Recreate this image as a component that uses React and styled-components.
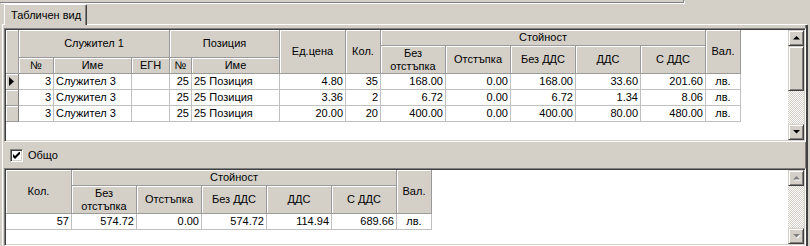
import { Fragment } from 'react';
import styled, { createGlobalStyle } from 'styled-components';

const GlobalStyle = createGlobalStyle`
  html, body {
    margin: 0;
    padding: 0;
    background: #D4D0C8;
    font-family: "Liberation Sans", Arial, sans-serif;
    font-size: 11px;
    color: #000;
  }
`

const Window = styled.div`
  width: 810px;
  height: 246px;
  overflow: hidden;
  background: #D4D0C8;
`
const TopEdge = styled.div`
  width: 683px;
  height: 2px;
  border-bottom: 1px solid #808080;
  border-right: 1px solid #808080;
  box-shadow: 1px 1px 0 #fff;
`
const TabStrip = styled.div`
  display: flex;
  align-items: flex-end;
  margin-top: 1px;
  height: 21px;
  padding-left: 2px;
`
const StripLead = styled.div`
  width: 2px;
  border-bottom: 1px solid #fff;
`
const StripRest = styled.div`
  width: 720px;
  border-bottom: 1px solid #fff;
`
const Tab = styled.div`
  box-sizing: border-box;
  width: 83px;
  height: 21px;
  padding: 4px 0 0 6px;
  border-left: 1px solid #fff;
  border-top: 1px solid #fff;
  border-right: 1px solid #404040;
  box-shadow: inset -1px 0 #808080;
  border-top-right-radius: 2px;
  white-space: nowrap;
`
const Page = styled.div`
  box-sizing: border-box;
  width: 806px;
  margin-left: 2px;
  height: 230px;
  padding: 3px 0 0 1px;
  border-left: 1px solid #fff;
  border-right: 2px solid;
  border-right-color: #404040;
  box-shadow: inset -1px 0 #808080;
  display: flex;
  flex-direction: column;
`
const GridFrame = styled.div`
  box-sizing: border-box;
  width: 802px;
  height: ${p => p.$h}px;
  display: flex;
  border: 1px solid;
  border-color: #808080 #fff #fff #808080;
  box-shadow: inset 1px 1px #404040, inset -1px -1px #D4D0C8;
  padding: 1px;
`
const GridBody = styled.div`
  flex: 1;
  background: #fff;
  overflow: hidden;
`
const Cells = styled.div`
  display: grid;
  grid-template-columns: ${p => p.$cols};
  grid-template-rows: ${p => p.$rows};
  width: max-content;
`
const Head = styled.div`
  box-sizing: border-box;
  grid-column: ${p => p.$col};
  grid-row: ${p => p.$row};
  background: #D4D0C8;
  border-right: 1px solid #9a9a9a;
  border-bottom: 1px solid #9a9a9a;
  box-shadow: inset 1px 1px #fff;
  display: flex;
  align-items: center;
  justify-content: center;
  text-align: center;
  line-height: 13px;
  padding: 0 2px;
  white-space: nowrap;
`
const Indicator = styled.div`
  box-sizing: border-box;
  grid-column: 1;
  background: #D4D0C8;
  border-right: 1px solid #808080;
  border-bottom: 1px solid #9a9a9a;
  box-shadow: inset 1px 1px #fff;
  display: flex;
  align-items: center;
  padding-left: 3px;
`
const Cell = styled.div`
  box-sizing: border-box;
  border-right: 1px solid #c0c0c0;
  border-bottom: 1px solid #c0c0c0;
  padding: 0 2px;
  line-height: 15px;
  text-align: ${p => p.$align || 'right'};
  white-space: nowrap;
  overflow: hidden;
`
const Scroll = styled.div`
  width: 16px;
  display: flex;
  flex-direction: column;
`
const ScrollButton = styled.div`
  box-sizing: border-box;
  width: 16px;
  height: 16px;
  background: #D4D0C8;
  border: 1px solid;
  border-color: #D4D0C8 #404040 #404040 #D4D0C8;
  box-shadow: inset 1px 1px #fff, inset -1px -1px #808080;
  display: flex;
  align-items: center;
  justify-content: center;
`
const Track = styled.div`
  flex: 1;
  background: repeating-conic-gradient(#D4D0C8 0 25%, #fff 0 50%) 0 0 / 2px 2px;
`
const Thumb = styled.div`
  box-sizing: border-box;
  height: ${p => p.$h}px;
  background: #D4D0C8;
  border: 1px solid;
  border-color: #D4D0C8 #404040 #404040 #D4D0C8;
  box-shadow: inset 1px 1px #fff, inset -1px -1px #808080;
`
const OptionsBar = styled.div`
  height: 26px;
  display: flex;
  align-items: center;
  gap: 5px;
  padding-left: 6px;
`
const CheckBox = styled.div`
  box-sizing: border-box;
  width: 13px;
  height: 13px;
  background: #fff;
  border: 1px solid;
  border-color: #808080 #fff #fff #808080;
  box-shadow: inset 1px 1px #404040, inset -1px -1px #D4D0C8;
  display: flex;
  align-items: center;
  justify-content: center;
`

const Arrow = ({ down, disabled }) => (
  <svg width="7" height="4" viewBox="0 0 7 4" style={{ overflow: 'visible' }}>
    {disabled && <polygon points={down ? '1,1 8,1 4.5,4.5' : '4.5,1 8,4.5 1,4.5'} fill="#fff" />}
    <polygon points={down ? '0,0 7,0 3.5,3.5' : '3.5,0 7,3.5 0,3.5'} fill={disabled ? '#808080' : '#000'} />
  </svg>
)

const ScrollBar = ({ thumb, disabled }) => (
  <Scroll>
    <ScrollButton><Arrow disabled={disabled} /></ScrollButton>
    <Track>{thumb && <Thumb $h={thumb} />}</Track>
    <ScrollButton><Arrow down disabled={disabled} /></ScrollButton>
  </Scroll>
)

const TwoLine = () => <span>Без<br />отстъпка</span>

const rows = [
  ['3', 'Служител 3', '', '25', '25 Позиция', '4.80', '35', '168.00', '0.00', '168.00', '33.60', '201.60', 'лв.'],
  ['3', 'Служител 3', '', '25', '25 Позиция', '3.36', '2', '6.72', '0.00', '6.72', '1.34', '8.06', 'лв.'],
  ['3', 'Служител 3', '', '25', '25 Позиция', '20.00', '20', '400.00', '0.00', '400.00', '80.00', '480.00', 'лв.'],
]
const alignOf = j => (j === 1 || j === 4 ? 'left' : j === 12 ? 'center' : 'right')

const ItemsGrid = () => (
  <Cells $cols="13px 35px 78px 38px 22px 88px 66px 35px 65px 65px 65px 65px 65px 35px" $rows="16px 12px 16px repeat(3, 16px)">
    <Head $col="1" $row="1 / 4" />
    <Head $col="2 / 5" $row="1 / 3">Служител 1</Head>
    <Head $col="5 / 7" $row="1 / 3">Позиция</Head>
    <Head $col="7" $row="1 / 4">Ед.цена</Head>
    <Head $col="8" $row="1 / 4">Кол.</Head>
    <Head $col="9 / 14" $row="1">Стойност</Head>
    <Head $col="14" $row="1 / 4">Вал.</Head>
    <Head $col="2" $row="3">№</Head>
    <Head $col="3" $row="3">Име</Head>
    <Head $col="4" $row="3">ЕГН</Head>
    <Head $col="5" $row="3">№</Head>
    <Head $col="6" $row="3">Име</Head>
    <Head $col="9" $row="2 / 4"><TwoLine /></Head>
    <Head $col="10" $row="2 / 4">Отстъпка</Head>
    <Head $col="11" $row="2 / 4">Без ДДС</Head>
    <Head $col="12" $row="2 / 4">ДДС</Head>
    <Head $col="13" $row="2 / 4">С ДДС</Head>
    {rows.map((r, i) => (
      <Fragment key={i}>
        <Indicator>
          {i === 0 && (
            <svg width="5" height="9" viewBox="0 0 5 9"><polygon points="0,0 5,4.5 0,9" fill="#000" /></svg>
          )}
        </Indicator>
        {r.map((v, j) => (
          <Cell key={j} $align={alignOf(j)}>{v}</Cell>
        ))}
      </Fragment>
    ))}
  </Cells>
)

const totals = ['57', '574.72', '0.00', '574.72', '114.94', '689.66', 'лв.']

const TotalsGrid = () => (
  <Cells $cols="66px 65px 65px 65px 65px 65px 35px" $rows="16px 28px 16px">
    <Head $col="1" $row="1 / 3">Кол.</Head>
    <Head $col="2 / 7" $row="1">Стойност</Head>
    <Head $col="7" $row="1 / 3">Вал.</Head>
    <Head $col="2" $row="2"><TwoLine /></Head>
    <Head $col="3" $row="2">Отстъпка</Head>
    <Head $col="4" $row="2">Без ДДС</Head>
    <Head $col="5" $row="2">ДДС</Head>
    <Head $col="6" $row="2">С ДДС</Head>
    {totals.map((v, j) => (
      <Cell key={j} $align={j === 6 ? 'center' : 'right'}>{v}</Cell>
    ))}
  </Cells>
)

export default function App() {
  return (
    <Window>
      <GlobalStyle />
      <TopEdge />
      <TabStrip>
        <StripLead />
        <Tab>Табличен вид</Tab>
        <StripRest />
      </TabStrip>
      <Page>
        <GridFrame $h={114}>
          <GridBody><ItemsGrid /></GridBody>
          <ScrollBar thumb={45} />
        </GridFrame>
        <OptionsBar>
          <CheckBox>
            <svg width="7" height="7" viewBox="0 0 7 7">
              <path d="M0 2 L2 4 L7 -1 L7 2 L2 7 L0 5 Z" fill="#000" />
            </svg>
          </CheckBox>
          Общо
        </OptionsBar>
        <GridFrame $h={78}>
          <GridBody><TotalsGrid /></GridBody>
          <ScrollBar disabled />
        </GridFrame>
      </Page>
    </Window>
  )
}
